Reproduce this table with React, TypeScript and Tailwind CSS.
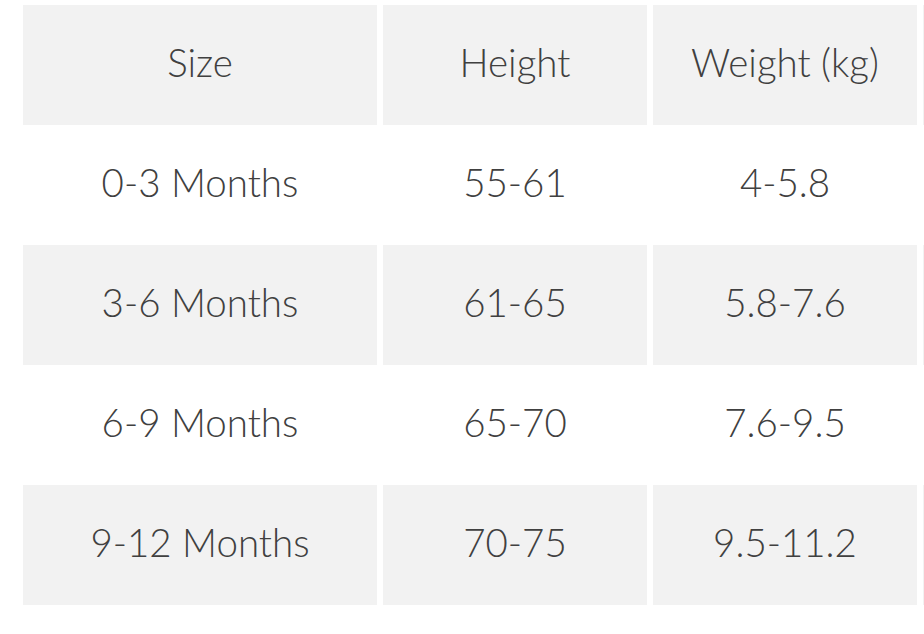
const rows = [
  ["Size", "Height", "Weight (kg)"],
  ["0-3 Months", "55-61", "4-5.8"],
  ["3-6 Months", "61-65", "5.8-7.6"],
  ["6-9 Months", "65-70", "7.6-9.5"],
  ["9-12 Months", "70-75", "9.5-11.2"],
];

export default function App() {
  return (
    <div className="h-[634px] w-[924px] overflow-hidden bg-white pl-[23px] pt-[5px]">
      <div
        className="grid w-max grid-cols-[354px_264px_264px_264px] gap-x-[6px] text-[38.5px] font-light leading-none text-[#404040]"
        style={{ fontFamily: "Lato, 'Noto Sans', sans-serif" }}
      >
        {rows.map((row, i) => {
          const bg = i % 2 === 0 ? "bg-[#f2f2f2]" : "bg-white";
          return (
            <div key={i} className="contents">
              {row.map((cell, j) => (
                <div key={j} className={`flex h-[120px] items-center justify-center pb-[6px] ${bg}`}>
                  {cell}
                </div>
              ))}
              <div className={`h-[120px] ${bg}`} />
            </div>
          );
        })}
      </div>
    </div>
  );
}
